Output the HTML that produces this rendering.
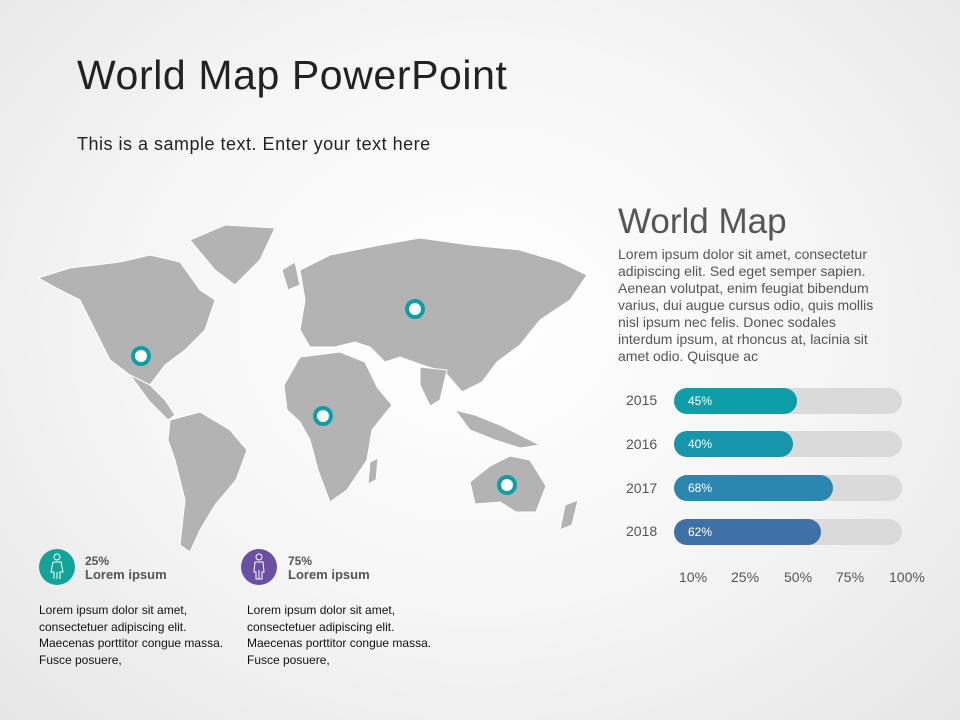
<!DOCTYPE html>
<html><head><meta charset="utf-8"><style>
body{margin:0;width:960px;height:720px;overflow:hidden;background:radial-gradient(ellipse at 50% 45%,#ffffff 0%,#f6f6f6 50%,#e6e6e6 100%);font-family:"Liberation Sans",sans-serif;position:relative}
.a{position:absolute;white-space:nowrap}
.bar{position:absolute;left:674px;width:228px;height:26px;border-radius:13px;background:#dadada}
.bar div{height:26px;border-radius:13px;color:#fff;font-size:12px;line-height:26px;padding-left:14px;box-sizing:border-box}
.yr{position:absolute;left:626px;font-size:14px;color:#555}
.p{font-size:12px;line-height:16.5px;color:#111}
</style></head><body>
<div class="a" style="left:77px;top:52px;font-size:41px;color:#222;letter-spacing:0.6px">World Map PowerPoint</div>
<div class="a" style="left:77px;top:134px;font-size:18px;color:#222;letter-spacing:0.5px">This is a sample text. Enter your text here</div>
<div class="a" style="left:618px;top:202px;font-size:35px;color:#555">World Map</div>
<div class="a" style="left:618px;top:246px;font-size:14px;line-height:17px;color:#555">Lorem ipsum dolor sit amet, consectetur<br>adipiscing elit. Sed eget semper sapien.<br>Aenean volutpat, enim feugiat bibendum<br>varius, dui augue cursus odio, quis mollis<br>nisl ipsum nec felis. Donec sodales<br>interdum ipsum, at rhoncus at, lacinia sit<br>amet odio. Quisque ac</div>
<div class="yr" style="top:392px">2015</div><div class="bar" style="top:388px"><div style="width:123px;background:#0e9ea8">45%</div></div>
<div class="yr" style="top:436px">2016</div><div class="bar" style="top:431px"><div style="width:119px;background:#1795ab">40%</div></div>
<div class="yr" style="top:480px">2017</div><div class="bar" style="top:475px"><div style="width:159px;background:#2b87b0">68%</div></div>
<div class="yr" style="top:523px">2018</div><div class="bar" style="top:519px"><div style="width:147px;background:#3f70a6">62%</div></div>
<div class="a" style="left:679px;top:569px;font-size:14px;color:#555">10%</div>
<div class="a" style="left:731px;top:569px;font-size:14px;color:#555">25%</div>
<div class="a" style="left:784px;top:569px;font-size:14px;color:#555">50%</div>
<div class="a" style="left:836px;top:569px;font-size:14px;color:#555">75%</div>
<div class="a" style="left:889px;top:569px;font-size:14px;color:#555">100%</div>

<svg class="a" style="left:0;top:0" width="960" height="720">
<g fill="#b3b3b3" stroke="#fff" stroke-width="1">
<path d="M38,278 L70,268 L120,262 L150,255 L180,262 L200,290 L215,300 L205,330 L185,350 L165,365 L150,385 L130,375 L110,360 L95,330 L80,300 L60,290 Z"/>
<path d="M190,240 L225,225 L275,228 L260,260 L235,285 L215,270 Z"/>
<path d="M130,375 L150,385 L165,400 L175,415 L168,420 L150,402 Z"/>
<path d="M170,420 L200,412 L230,430 L247,450 L236,480 L215,505 L200,530 L190,552 L180,545 L185,500 L175,460 L168,440 Z"/>
<path d="M300,270 L330,255 L380,245 L420,238 L470,245 L520,250 L560,262 L587,275 L570,300 L540,320 L520,345 L497,362 L482,382 L462,392 L445,372 L422,365 L400,357 L385,362 L370,347 L355,342 L335,347 L310,347 L300,330 L305,300 Z"/>
<path d="M300,357 L340,352 L365,362 L377,387 L392,405 L372,430 L367,460 L347,490 L330,502 L318,470 L310,440 L300,422 L287,410 L284,385 Z"/>
<path d="M420,367 L447,370 L440,400 L430,406 L420,385 Z"/>
<path d="M470,482 L490,466 L510,456 L530,460 L546,486 L536,512 L516,512 L500,502 L475,504 Z"/>
<path d="M370,462 L378,458 L376,480 L368,484 Z"/>
<path d="M455,410 L475,415 L500,425 L520,435 L540,445 L520,448 L495,440 L470,430 Z"/>
<path d="M565,505 L578,500 L572,525 L560,530 Z"/>
<path d="M282,270 L295,262 L300,285 L288,290 Z"/>
</g>
<g fill="#fff" stroke="#0e9ea8" stroke-width="4">
<circle cx="141" cy="356" r="8"/><circle cx="415" cy="309" r="8"/><circle cx="323" cy="416" r="8"/><circle cx="507" cy="485" r="8"/>
</g>
<circle cx="57" cy="567" r="18" fill="#12a39b"/>
<circle cx="259" cy="567" r="18" fill="#6a4fa3"/>
<g fill="none" stroke="#fff" stroke-width="1">
<circle cx="57" cy="557" r="3"/><path d="M53,562 L61,562 L63,572 L60,572 L60,579 M54,572 L51,572 L53,562 M54,572 L54,579 M57,572 L57,579"/>
<circle cx="259" cy="557" r="3"/><path d="M255,562 L263,562 L264,572 L262,572 L262,579 L256,579 L256,572 L254,572 Z M259,570 L259,579"/>
</g>
</svg>
<div class="a" style="left:85px;top:554px;font-size:12px;font-weight:bold;color:#555;line-height:14px">25%<br><span style="font-size:13px">Lorem ipsum</span></div>
<div class="a" style="left:288px;top:554px;font-size:12px;font-weight:bold;color:#555;line-height:14px">75%<br><span style="font-size:13px">Lorem ipsum</span></div>
<div class="a p" style="left:39px;top:602px">Lorem ipsum dolor sit amet,<br>consectetuer adipiscing elit.<br>Maecenas porttitor congue massa.<br>Fusce posuere,</div>
<div class="a p" style="left:247px;top:602px">Lorem ipsum dolor sit amet,<br>consectetuer adipiscing elit.<br>Maecenas porttitor congue massa.<br>Fusce posuere,</div>
</body></html>
